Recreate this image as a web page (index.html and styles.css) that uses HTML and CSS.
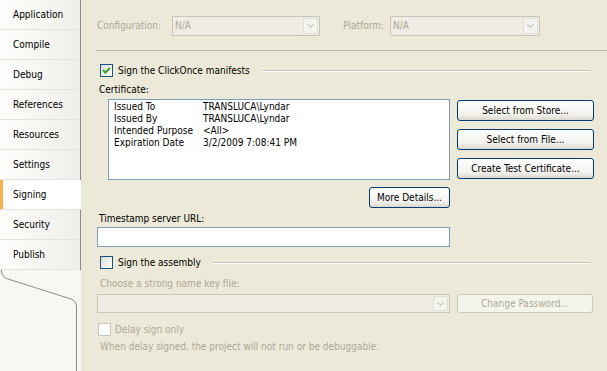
FILE: index.html
```html
<!DOCTYPE html>
<html lang="en">
<head>
    <meta charset="UTF-8">
    <title>Signing</title>
    <link rel="stylesheet" href="styles.css">
</head>
<body>
    <div class="window">
        <!-- Project designer tabs -->
        <nav class="tabs">
            <div class="tab">Application</div>
            <div class="tab">Compile</div>
            <div class="tab">Debug</div>
            <div class="tab">References</div>
            <div class="tab">Resources</div>
            <div class="tab">Settings</div>
            <div class="tab active">Signing</div>
            <div class="tab">Security</div>
            <div class="tab">Publish</div>
            <svg class="tab-end" width="81" height="101" viewBox="0 0 81 101">
                <path d="M1.5 0 V2 Q2 7 8 9 L71 29 Q76.5 31 76.5 37 V101" fill="none" stroke="#8d8d8a" stroke-width="1"/>
            </svg>
        </nav>

        <main class="page">
            <div class="config-row">
                <span class="label disabled cfg-label">Configuration:</span>
                <div class="combo disabled cfg-combo"><span>N/A</span><i class="drop"></i></div>
                <span class="label disabled plat-label">Platform:</span>
                <div class="combo disabled plat-combo"><span>N/A</span><i class="drop"></i></div>
            </div>

            <div class="check-row first">
                <span class="check checked">
                    <svg width="9" height="9" viewBox="0 0 9 9"><path d="M1 4.2 L3.4 6.6 L8 1.8" fill="none" stroke="#21a121" stroke-width="1.8"/></svg>
                </span>
                <span class="check-text">Sign the ClickOnce manifests</span>
                <span class="rule"></span>
            </div>

            <div class="field-label cert-label">Certificate:</div>
            <div class="cert">
                <div class="cert-list">
                    <div class="cert-row"><span class="cert-key">Issued To</span><span>TRANSLUCA\Lyndar</span></div>
                    <div class="cert-row"><span class="cert-key">Issued By</span><span>TRANSLUCA\Lyndar</span></div>
                    <div class="cert-row"><span class="cert-key">Intended Purpose</span><span>&lt;All&gt;</span></div>
                    <div class="cert-row"><span class="cert-key">Expiration Date</span><span>3/2/2009 7:08:41 PM</span></div>
                </div>
                <div class="cert-buttons">
                    <button class="btn">Select from Store...</button>
                    <button class="btn">Select from File...</button>
                    <button class="btn">Create Test Certificate...</button>
                </div>
            </div>
            <div class="details-row">
                <button class="btn details">More Details...</button>
            </div>

            <div class="field-label stamp-label">Timestamp server URL:</div>
            <input class="textbox" type="text">

            <div class="check-row second">
                <span class="check"></span>
                <span class="check-text">Sign the assembly</span>
                <span class="rule"></span>
            </div>

            <div class="field-label disabled key-label">Choose a strong name key file:</div>
            <div class="key-row">
                <div class="combo disabled key-combo"><span></span><i class="drop"></i></div>
                <button class="btn disabled pw">Change Password...</button>
            </div>

            <div class="check-row delay">
                <span class="check off"></span>
                <span class="check-text disabled">Delay sign only</span>
            </div>
            <div class="field-label disabled note">When delay signed, the project will not run or be debuggable.</div>
        </main>
    </div>
</body>
</html>
```

FILE: styles.css
```css
/* Base page */
body {
    margin: 0;
    font-family: "DejaVu Sans", "Liberation Sans", sans-serif;
    font-stretch: condensed;
    font-size: 10px;
    color: #000;
}

.window {
    display: flex;
    width: 607px;
    height: 371px;
    overflow: hidden;
}

/* Left tab strip */
.tabs {
    display: flex;
    flex-direction: column;
    width: 81px;
    flex-shrink: 0;
    box-sizing: border-box;
    border-right: 1px solid #8c8c88;
    background: linear-gradient(to right, #fdfdfb, #efeee9);
}

.tab {
    height: 30px;
    line-height: 29px;
    padding-left: 13px;
    box-sizing: border-box;
    border-bottom: 1px solid #e4e3dc;
}

.tab.active {
    background: #fff;
    margin-right: -1px;
    box-shadow: inset 3px 0 #f5b24a;
}

.tab-end {
    display: block;
    background: #f8f7f3;
}

/* Main property page */
.page {
    flex: 1;
    background: #ece9d8;
    padding-left: 15px;
}

.disabled {
    color: #aca899;
}

.config-row {
    display: flex;
    height: 34px;
    padding-top: 16px;
    border-bottom: 1px solid #b9b6a6;
}

.label {
    line-height: 20px;
    padding-left: 1px;
}

.cfg-label { width: 75px; }
.plat-label { width: 47px; margin-left: 22px; }

.combo {
    position: relative;
    height: 20px;
    box-sizing: border-box;
    border: 1px solid #c9c7ba;
    background: #efede3;
    line-height: 18px;
    padding-left: 2px;
}

.cfg-combo { width: 148px; }
.plat-combo { width: 150px; }

.drop {
    position: absolute;
    right: 1px;
    top: 1px;
    width: 15px;
    height: 16px;
    border: 1px solid #e2e0d6;
    background: #f4f3ee;
    box-sizing: border-box;
}

.drop::after {
    content: "";
    position: absolute;
    left: 4px;
    top: 3px;
    width: 4px;
    height: 4px;
    border-right: 1px solid #c4c2b6;
    border-bottom: 1px solid #c4c2b6;
    transform: rotate(45deg);
}

/* Checkbox rows with a group rule */
.check-row {
    display: flex;
    align-items: center;
    height: 13px;
}

.check-row.first { margin-top: 13px; }
.check-row.second { margin-top: 9px; }
.check-row.delay { margin-top: 10px; }

.check {
    display: flex;
    align-items: center;
    justify-content: center;
    width: 13px;
    height: 13px;
    box-sizing: border-box;
    margin-left: 4px;
    border: 1px solid #1c5180;
    background: linear-gradient(135deg, #dcdcd7, #fff);
}

.check.off {
    margin-left: 2px;
    border-color: #cac8bb;
    background: #fff;
}

.check-text {
    margin-left: 5px;
}

.delay .check-text {
    margin-left: 4px;
}

.rule {
    flex: 1;
    height: 1px;
    margin: 0 17px 0 12px;
    background: #c9c6b6;
    box-shadow: 0 1px #fff;
}

.field-label {
    line-height: 12px;
    padding-left: 3px;
}

.cert-label { margin-top: 7px; }
.stamp-label { margin-top: 5px; }
.key-label { margin-top: 9px; padding-left: 4px; }
.note { margin-top: 5px; padding-left: 4px; }

/* Certificate list and buttons */
.cert {
    display: flex;
    margin-top: 3px;
    margin-left: 12px;
}

.cert-list {
    width: 342px;
    height: 81px;
    box-sizing: border-box;
    border: 1px solid #7f9db9;
    background: #fff;
    padding: 1px 0 0 5px;
}

.cert-row {
    display: flex;
    line-height: 12px;
}

.cert-key {
    width: 89px;
}

.cert-buttons {
    display: flex;
    flex-direction: column;
    gap: 8px;
    margin-left: 7px;
    margin-top: 1px;
}

.btn {
    height: 21px;
    padding: 0;
    font: inherit;
    color: #000;
    border: 1px solid #003c74;
    border-radius: 3px;
    background: linear-gradient(#fff, #f3f2ee 70%, #dcd8cd);
}

.cert-buttons .btn {
    width: 137px;
}

.details-row {
    margin-top: 7px;
    padding-left: 273px;
}

.btn.details {
    width: 81px;
}

.textbox {
    display: block;
    width: 353px;
    height: 20px;
    box-sizing: border-box;
    margin: 2px 0 0 1px;
    border: 1px solid #7f9db9;
    background: #fff;
}

/* Strong name key file */
.key-row {
    display: flex;
    margin-top: 4px;
    margin-left: 1px;
}

.key-combo {
    width: 353px;
    height: 19px;
}

.key-combo .drop {
    height: 15px;
}

.btn.pw {
    width: 136px;
    height: 19px;
    margin-left: 7px;
    border-color: #cac8bb;
    color: #aca899;
    background: #f5f4ea;
}
```
